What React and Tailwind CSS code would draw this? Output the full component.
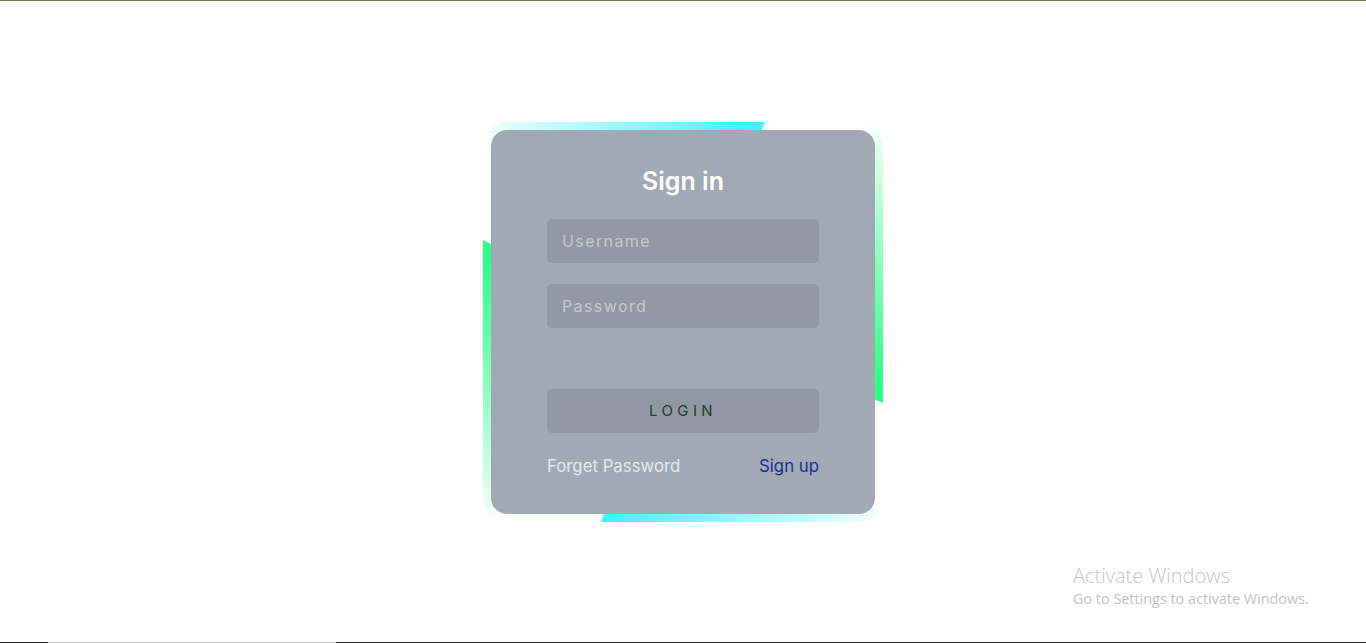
import React from "react";

function BorderGlow() {
  return (
    <svg
      className="absolute inset-0 w-full h-full"
      viewBox="0 0 400 400"
      width="400"
      height="400"
      aria-hidden="true"
    >
      <defs>
        <clipPath id="outerClip">
          <rect x="0" y="0" width="400" height="400" rx="24" ry="24" />
        </clipPath>
        <linearGradient id="gTop" x1="0" y1="0" x2="262" y2="0" gradientUnits="userSpaceOnUse">
          <stop offset="0" stopColor="#45f3ff" stopOpacity="0.06" />
          <stop offset="1" stopColor="#45f3ff" stopOpacity="1" />
        </linearGradient>
        <linearGradient id="gRight" x1="0" y1="0" x2="0" y2="260" gradientUnits="userSpaceOnUse">
          <stop offset="0" stopColor="#2bff88" stopOpacity="0.04" />
          <stop offset="1" stopColor="#2bff88" stopOpacity="1" />
        </linearGradient>
        <linearGradient id="gBottom" x1="128" y1="0" x2="400" y2="0" gradientUnits="userSpaceOnUse">
          <stop offset="0" stopColor="#45f3ff" stopOpacity="1" />
          <stop offset="1" stopColor="#45f3ff" stopOpacity="0.06" />
        </linearGradient>
        <linearGradient id="gLeft" x1="0" y1="138" x2="0" y2="400" gradientUnits="userSpaceOnUse">
          <stop offset="0" stopColor="#2bff88" stopOpacity="1" />
          <stop offset="1" stopColor="#2bff88" stopOpacity="0.04" />
        </linearGradient>
      </defs>
      <g clipPath="url(#outerClip)">
        <polygon points="0,0 282,0 277,12 0,12" fill="url(#gTop)" />
        <polygon points="388,0 400,0 400,281 388,276" fill="url(#gRight)" />
        <polygon points="123,386 400,386 400,400 118,400" fill="url(#gBottom)" />
        <polygon points="0,118 12,124 12,400 0,400" fill="url(#gLeft)" />
      </g>
    </svg>
  );
}

export default function App() {
  return (
    <div className="w-full h-[643px] bg-white flex flex-col overflow-hidden font-['Inter',sans-serif]">
      <div className="h-px w-full bg-[#7b7452] shrink-0" />
      <main className="relative flex-1 flex justify-center items-start pt-[121px]">
        <div className="relative w-[400px] h-[400px] rounded-[24px] p-2">
          <BorderGlow />
          <div className="relative w-full h-full rounded-2xl bg-[#a1aab4] flex flex-col items-center pt-[35px] px-14">
            <h2 className="text-[25px] leading-8 font-semibold text-white">Sign in</h2>
            <div className="w-full mt-[22px] flex flex-col gap-[21px]">
              <div className="h-11 w-full rounded-[5px] bg-[#9198a1] flex items-center px-[15px]">
                <span className="text-[16px] tracking-[1.4px] text-[#c4cad0]">Username</span>
              </div>
              <div className="h-11 w-full rounded-[5px] bg-[#9198a1] flex items-center px-[15px]">
                <span className="text-[16px] tracking-[1.4px] text-[#c4cad0]">Password</span>
              </div>
            </div>
            <button className="mt-[61px] h-11 w-full rounded-[5px] bg-[#9198a1] flex items-center justify-center">
              <span className="text-[15px] tracking-[4.4px] text-[#213d30]">LOGIN</span>
            </button>
            <div className="mt-[21px] w-full flex justify-between items-center leading-6">
              <span className="text-[16.8px] text-[#e7eaee]">Forget Password</span>
              <span className="text-[16.8px] text-[#1f2c9e]">Sign up</span>
            </div>
          </div>
        </div>
        <div className="absolute left-[1073px] top-[563px] font-['Open_Sans',sans-serif] text-[#c6c6c6] font-light">
          <div className="text-[20px] leading-6">Activate Windows</div>
          <div className="text-[14.4px] leading-5 mt-[1px] text-[#c2c2c2] font-normal">Go to Settings to activate Windows.</div>
        </div>
      </main>
      <div className="h-px w-full flex shrink-0">
        <div className="w-12 bg-[#1f1f1f]" />
        <div className="w-[288px] bg-[#c4c4c4]" />
        <div className="flex-1 bg-[#2a2a2a]" />
      </div>
    </div>
  );
}
